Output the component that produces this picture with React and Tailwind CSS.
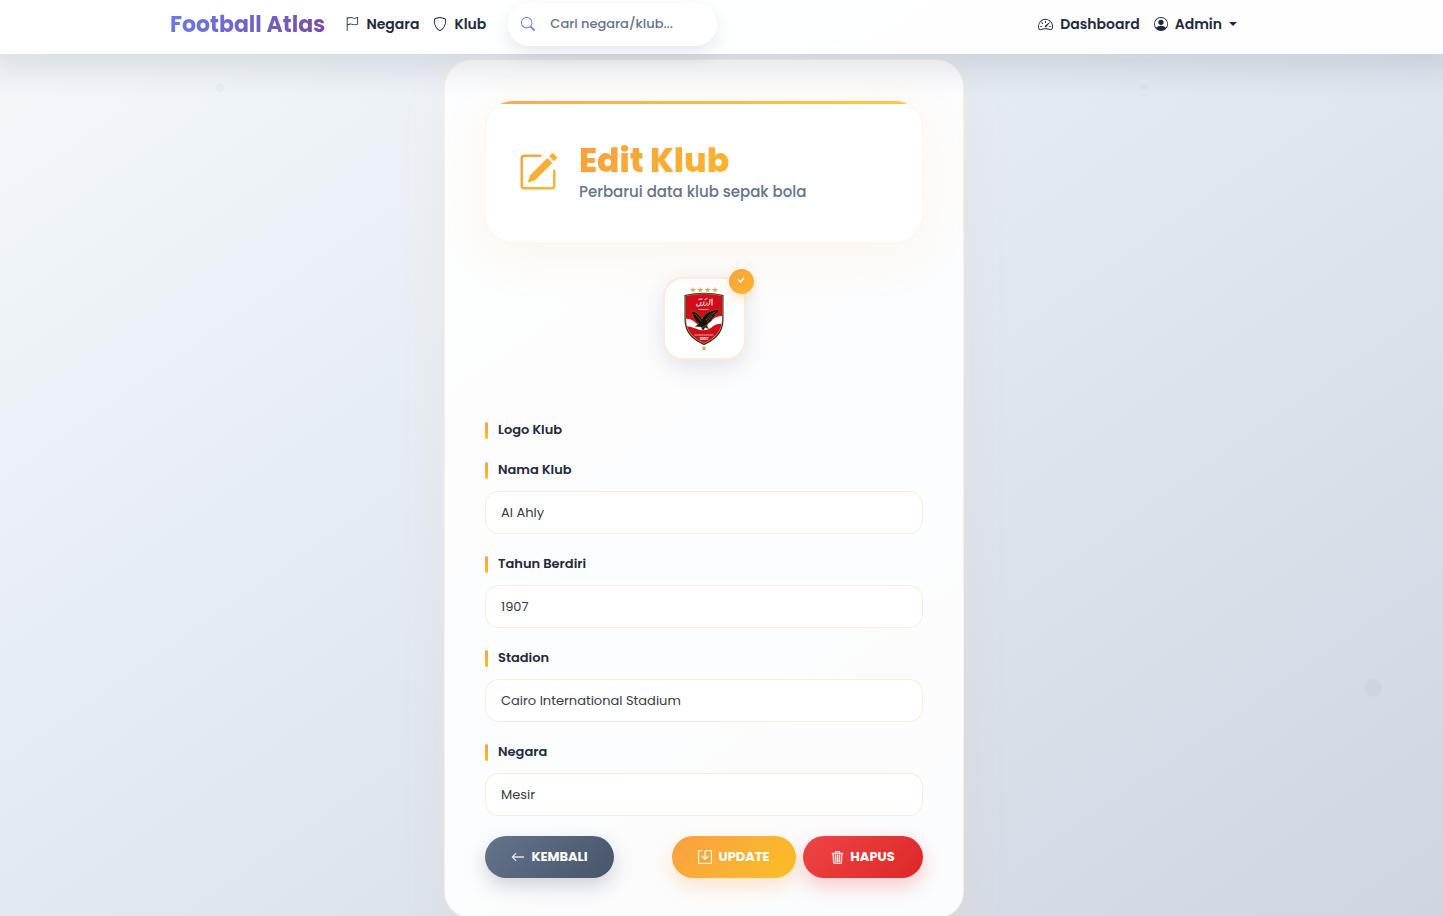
import { useId } from "react";
import {
  BsFlag,
  BsShield,
  BsSearch,
  BsSpeedometer2,
  BsPersonCircle,
  BsCheck,
  BsArrowLeft,
  BsSave,
  BsTrash3,
} from "react-icons/bs";

const STAR = "M0-3.2L.8-1 3-1 1.200.4 1.900 2.600 0 1.300-1.900 2.600-1.200.4-3-1-.8-1Z";

function PencilIcon() {
  return (
    <svg viewBox="0 0 16 16" className="size-10 shrink-0" aria-hidden="true">
      <defs>
        <linearGradient id="pencil" x1="0" y1="0" x2="1" y2="1">
          <stop offset="0" stopColor="#f6a440" />
          <stop offset="1" stopColor="#fbb829" />
        </linearGradient>
      </defs>
      <g fill="url(#pencil)">
        <path d="M15.502 1.94a.5.5 0 0 1 0 .706L14.459 3.69l-2-2L13.502.646a.5.5 0 0 1 .707 0l1.293 1.293zm-1.75 2.456-2-2L4.939 9.21a.5.5 0 0 0-.121.196l-.805 2.414a.25.25 0 0 0 .316.316l2.414-.805a.5.5 0 0 0 .196-.12l6.813-6.814z" />
        <path fillRule="evenodd" d="M1 13.500A1.500 1.500 0 0 0 2.500 15h11a1.500 1.500 0 0 0 1.500-1.500v-6a.5.5 0 0 0-1 0v6a.5.5 0 0 1-.5.5h-11a.5.5 0 0 1-.5-.5v-11a.5.5 0 0 1 .5-.5H9a.5.5 0 0 0 0-1H2.500A1.500 1.500 0 0 0 1 2.500z" />
      </g>
    </svg>
  );
}

function ClubCrest() {
  return (
    <svg viewBox="0 0 42 66" className="h-[66px] w-[42px]" role="img" aria-label="Al Ahly">
      <defs>
        <clipPath id="shield">
          <path d="M3 10Q21 6 39 10V33C39 46 30 53 21 57C12 53 3 46 3 33Z" />
        </clipPath>
      </defs>
      <g fill="#d9ac57">
        {[10, 17.300, 24.700, 32].map((x) => (
          <path key={x} d={STAR} transform={`translate(${x} 4)`} />
        ))}
        <path d={STAR} transform="translate(21 62.500)" />
      </g>
      <path d="M1.500 9Q21 4.500 40.500 9V33C40.500 48 31 54.500 21 59C11 54.500 1.500 48 1.500 33Z" fill="#2c2320" />
      <path d="M2.500 9.700Q21 5.500 39.500 9.700V33C39.500 47 30.500 53.500 21 57.800C11.500 53.500 2.500 47 2.500 33Z" fill="#c9a05a" />
      <g clipPath="url(#shield)">
        <rect width="42" height="60" fill="#d20d1a" />
        <path d="M2 33Q8 32 14 38T27 36Q33 29 40 30V38Q33 37 28 42Q21 46 14 43T2 40Z" fill="#fff" />
      </g>
      <g fill="none" stroke="#fff" strokeLinecap="round">
        <path d="M14 18Q12 20 15 20.500Q18 20 18 16.500M18 19.500Q20.500 21 21 16M21 19Q23 21 24 17M24.500 19.500Q27 20 27 13.500M29 13V19M16 13.500L19 13M22 13.500L24 12.500" strokeWidth="1" />
        <path d="M16 23.500H26" strokeWidth=".7" strokeDasharray="1 1" />
        <path d="M12 49H30" strokeWidth=".7" strokeDasharray="1.200 1" />
      </g>
      <path
        d="M8 25C12 25 16 28 19 33C21 28 26 24 37 23.500C34 26 35 27 32 28.500C33 30 30 31 29 33C29 35 27 36 25 37L24 40L26 43L22 41.500L20 45L18 41L12 40.500L16 37.500C12 36 13 33 10 31C11 29 9 28 8 25Z"
        fill="#17130f"
        stroke="#b88a3d"
        strokeWidth=".4"
      />
      <path d="M12 28Q16 31 18 35M33 25.500Q27 28 23 34M29 30L24 36M18 42L24 39" stroke="#a07a3a" strokeWidth=".6" fill="none" />
      <text x="21" y="54" textAnchor="middle" fontSize="4" fontWeight="700" fill="#fff">
        1907
      </text>
    </svg>
  );
}

function FieldLabel({ htmlFor, children }) {
  return (
    <label
      htmlFor={htmlFor}
      className="flex h-5 items-center gap-[10px] text-[13px] font-semibold text-[#1e293b]"
    >
      <span className="mt-[1px] h-[17px] w-[3px] rounded-xs bg-linear-to-b from-[#f7a13f] to-[#fbbf24]" />
      {children}
    </label>
  );
}

function Field({ label, value }) {
  const id = useId();
  return (
    <div className="flex flex-col gap-[11px]">
      <FieldLabel htmlFor={id}>{label}</FieldLabel>
      <input
        id={id}
        type="text"
        defaultValue={value}
        className="h-[43px] w-full rounded-[14px] border border-[#f9a03f]/20 bg-white/90 px-[15px] text-[13px] text-[#363b40] outline-none focus:border-[#f9a03f]"
      />
    </div>
  );
}

const buttonBase =
  "flex h-[42px] items-center justify-center gap-[6px] rounded-full text-[13px] font-bold text-white";

export default function App() {
  return (
    <div className="relative min-h-screen overflow-hidden bg-linear-145 from-[#f5f9fc] via-[#e1e8f1] to-[#cfd6e1] font-['Poppins','Inter',sans-serif] text-[#1e293b]">
      <div aria-hidden="true">
        <span className="absolute top-[84px] left-[15%] size-2 rounded-full bg-slate-500/5" />
        <span className="absolute top-[83px] left-[79%] size-2 rounded-full bg-slate-500/5" />
        <span className="absolute top-[679px] right-[61px] size-[18px] rounded-full bg-slate-500/5" />
      </div>

      <header className="relative z-10 bg-white/95 pr-[35px] shadow-[0_0_32px_16px_rgba(30,41,59,0.12)]">
        <nav className="mx-auto flex h-[54px] max-w-[1068px] items-center pb-[6px] text-[14px] font-semibold">
          <a
            href="#"
            className="mr-5 bg-linear-135 from-[#667eea] to-[#764ba2] bg-clip-text text-[22px] font-bold text-transparent"
          >
            Football Atlas
          </a>
          <a href="#negara" className="flex items-center gap-[7px]">
            <BsFlag className="size-[14px]" />
            Negara
          </a>
          <a href="#klub" className="ml-[14px] flex items-center gap-[7px]">
            <BsShield className="size-[14px]" />
            Klub
          </a>
          <label className="ml-[22px] flex h-[43px] w-[209px] items-center gap-[15px] rounded-full bg-white px-[13px] shadow-[0_8px_20px_rgba(30,41,59,0.10)]">
            <BsSearch className="size-[14px] shrink-0 text-[#667eea]" />
            <input
              type="search"
              aria-label="Cari negara/klub"
              placeholder="Cari negara/klub..."
              className="w-full min-w-0 bg-transparent text-[13px] font-medium outline-none placeholder:text-[#64748b]"
            />
          </label>
          <a href="#dashboard" className="ml-auto flex items-center gap-[7px]">
            <BsSpeedometer2 className="size-[15px]" />
            Dashboard
          </a>
          <button type="button" className="ml-[14px] flex items-center gap-[7px]">
            <BsPersonCircle className="size-[14px]" />
            Admin
            <svg viewBox="0 0 8 4" className="mr-[1px] h-1 w-2" fill="currentColor" aria-hidden="true">
              <path d="M0 0H8L4 4Z" />
            </svg>
          </button>
        </nav>
      </header>

      <main className="relative pt-[5px] pr-[35px]">
        <form
          className="mx-auto max-w-[520px] rounded-[28px] border border-[#f9a03f]/15 bg-white/90 p-10 shadow-[0_20px_50px_rgba(249,160,63,0.08)]"
          onSubmit={(e) => e.preventDefault()}
        >
          <div className="relative flex h-[143px] items-center gap-[21px] overflow-hidden rounded-[28px] border border-[#f9a03f]/10 bg-white px-8 shadow-[0_12px_50px_rgba(249,160,63,0.10)]">
            <span className="absolute inset-x-0 top-0 h-[3px] bg-linear-to-r from-[#f7ab55] to-[#fdc843]" />
            <PencilIcon />
            <div>
              <h1 className="w-fit bg-linear-135 from-[#f7a13f] to-[#fbb42c] bg-clip-text text-[33px] leading-[38px] font-extrabold text-transparent">
                Edit Klub
              </h1>
              <p className="mt-[2px] text-[15px] leading-5 font-medium text-[#64748b]">
                Perbarui data klub sepak bola
              </p>
            </div>
          </div>

          <div className="relative mx-auto mt-[34px] flex size-[83px] items-center justify-center rounded-[20px] border-2 border-[#fdebdc] bg-white shadow-[0_8px_24px_rgba(30,41,59,0.12)]">
            <ClubCrest />
            <span className="absolute -top-[10px] -right-[10px] flex size-[25px] items-start justify-center rounded-full bg-linear-135 from-[#f7a13f] to-[#fbb429] pt-[5px] text-white shadow-[0_4px_12px_rgba(249,160,63,0.3)]">
              <BsCheck className="size-3" stroke="currentColor" strokeWidth=".5" />
            </span>
          </div>

          <div className="mt-[60px] flex flex-col gap-5">
            <FieldLabel>Logo Klub</FieldLabel>
            <Field label="Nama Klub" value="Al Ahly" />
            <Field label="Tahun Berdiri" value="1907" />
            <Field label="Stadion" value="Cairo International Stadium" />
            <Field label="Negara" value="Mesir" />
            <div className="flex items-center justify-between">
              <button
                type="button"
                className={`${buttonBase} w-[129px] bg-linear-135 from-[#64748b] to-[#475569] shadow-[0_8px_20px_rgba(71,85,105,0.25)]`}
              >
                <BsArrowLeft className="size-[14px]" stroke="currentColor" strokeWidth=".3" />
                KEMBALI
              </button>
              <div className="flex gap-[7px]">
                <button
                  type="submit"
                  className={`${buttonBase} w-[124px] bg-linear-135 from-[#f9a03f] to-[#fbbf24] shadow-[0_8px_20px_rgba(249,160,63,0.28)]`}
                >
                  <BsSave className="size-[14px]" stroke="currentColor" strokeWidth=".3" />
                  UPDATE
                </button>
                <button
                  type="button"
                  className={`${buttonBase} w-[120px] bg-linear-135 from-[#ef4444] to-[#dc2626] shadow-[0_8px_20px_rgba(239,68,68,0.28)]`}
                >
                  <BsTrash3 className="size-[13px]" stroke="currentColor" strokeWidth=".5" />
                  HAPUS
                </button>
              </div>
            </div>
          </div>
        </form>
      </main>
    </div>
  );
}
